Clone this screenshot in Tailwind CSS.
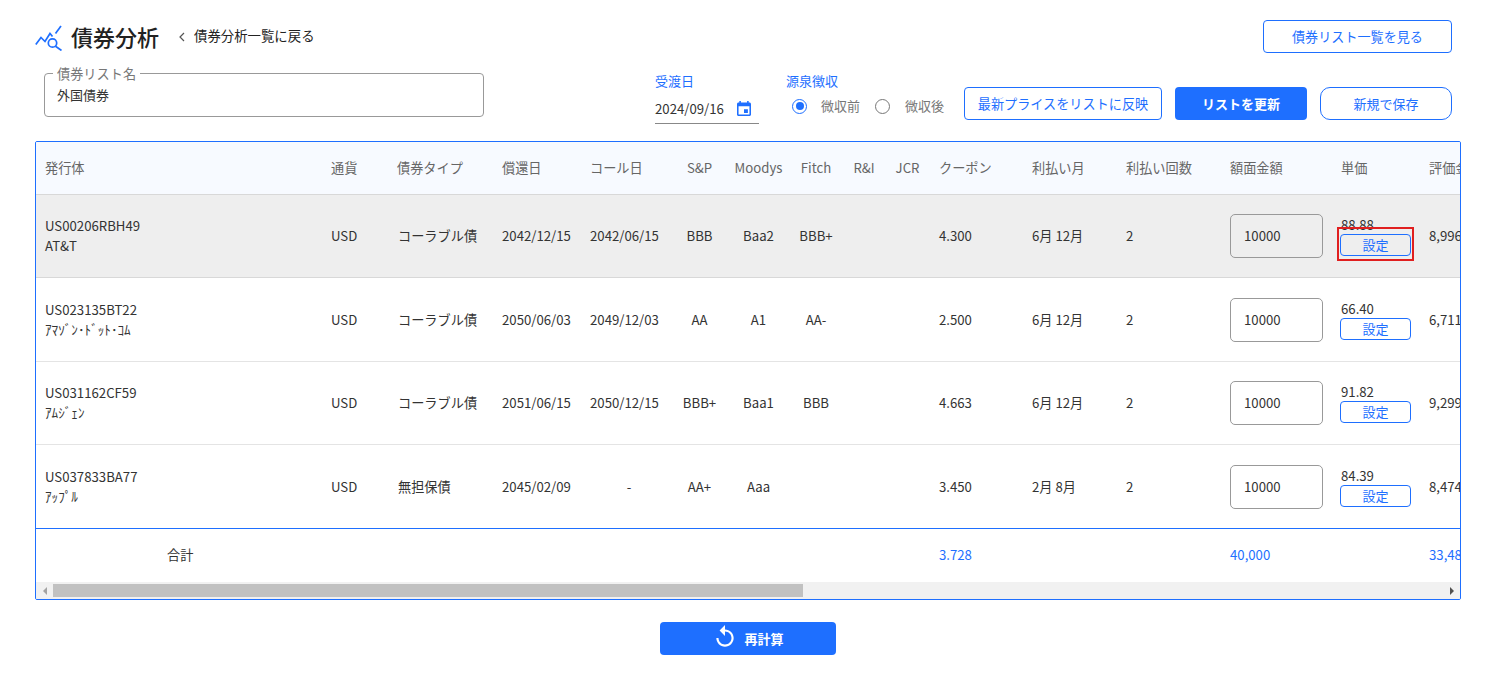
<!DOCTYPE html>
<html lang="ja">
<head>
<meta charset="UTF-8"/>
<title>債券分析</title>
<script src="https://cdn.jsdelivr.net/npm/@tailwindcss/browser@4"></script>
</head>
<body class="w-[1495px] h-[675px] overflow-hidden bg-white text-[13.2px] text-[#333] font-['Noto_Sans_CJK_JP','Noto_Sans',sans-serif]">
<div class="pl-[35px] pt-[20px] w-[1495px]">
    <!-- title -->
    <div class="flex items-start justify-between w-[1417px] h-[33px]">
        <div class="flex items-center h-[33px]">
            <svg class="w-[28px] h-[26px] mt-[2px]" viewBox="0 0 28 26" fill="none" stroke="#1e6fff" stroke-width="1.7">
                <path d="M0.8 19.5 L6 12.5 L10 16.5 L15 8.5 L17.5 11.5"/>
                <path d="M20.5 8.5 L26 1"/>
                <circle cx="17.5" cy="18" r="4.2"/>
                <path d="M20.5 21.2 L26.5 25.5"/>
            </svg>
            <div class="ml-[8px] text-[22px] leading-[33px] text-[#222] font-medium">債券分析</div>
            <svg class="ml-[20px] w-[6px] h-[10px]" viewBox="0 0 6 10" fill="none" stroke="#555" stroke-width="1.2"><path d="M5 1 L1 5 L5 9"/></svg>
            <div class="ml-[9px] -mt-[2px] text-[13.4px] text-[#222]">債券分析一覧に戻る</div>
        </div>
        <button class="w-[189px] h-[33px] border border-[#1e6fff] rounded-[4px] text-[#1e6fff] text-[13.1px]">債券リスト一覧を見る</button>
    </div>

    <!-- filters -->
    <div class="flex items-start h-[68px] mt-[20px] ml-[9px]">
        <div class="relative w-[440px] h-[44px] border border-[#999] rounded-[4px] pl-[12px] pt-[11px] text-[13px] leading-[19px] text-[#333]">
            <span class="absolute left-[8px] top-[-9px] px-[4px] bg-white text-[13.2px] leading-[18px] text-[#777]">債券リスト名</span>
            外国債券
        </div>
        <div class="ml-[171px] w-[104px]">
            <div class="text-[13px] leading-[18px] mt-[-1px] text-[#1e6fff]">受渡日</div>
            <div class="relative flex items-center h-[33px] mt-[1px] pt-[4px] border-b border-[#888] text-[13.2px] text-[#333]">
                <span>2024/09/16</span>
                <svg class="absolute right-[8px] top-[10px] w-[14px] h-[15px]" viewBox="3 1 18 20" preserveAspectRatio="none" fill="#1e6fff"><path d="M17 12h-5v5h5v-5zM16 1v2H8V1H6v2H5c-1.11 0-1.99.9-1.99 2L3 19c0 1.1.89 2 2 2h14c1.1 0 2-.9 2-2V5c0-1.1-.9-2-2-2h-1V1h-2zm3 18H5V8h14v11z"/></svg>
            </div>
        </div>
        <div class="ml-[27px] w-[178px]">
            <div class="text-[13px] leading-[18px] mt-[-1px] text-[#1e6fff]">源泉徴収</div>
            <div class="flex items-center h-[24px] mt-[4px] pl-[6px] text-[13px] text-[#777]">
                <span class="flex items-center justify-center w-[15px] h-[15px] rounded-full border-[1.5px] border-[#1e6fff]"><span class="w-[8px] h-[8px] rounded-full bg-[#1e6fff]"></span></span>
                <span class="ml-[14px]">微収前</span>
                <span class="ml-[15px] w-[15px] h-[15px] rounded-full border-[1.5px] border-[#777]"></span>
                <span class="ml-[15px]">微収後</span>
            </div>
        </div>
        <button class="mt-[14px] w-[198px] h-[33px] border border-[#1e6fff] rounded-[4px] text-[#1e6fff] text-[13.15px]">最新プライスをリストに反映</button>
        <button class="mt-[14px] ml-[13px] w-[132px] h-[33px] rounded-[4px] bg-[#1e6fff] text-white text-[13px] font-bold">リストを更新</button>
        <button class="mt-[14px] ml-[13px] w-[132px] h-[33px] border border-[#1e6fff] rounded-[10px] text-[#1e6fff] text-[13px]">新規で保存</button>
    </div>

    <!-- table -->
    <div class="w-[1426px] h-[459px] border border-[#1e6fff] rounded-[2px] overflow-hidden">
        <div class="h-[440px] overflow-hidden">
            <table class="table-fixed border-separate border-spacing-0 w-[1470px] text-[13.2px] text-[#333]">
                <colgroup>
                    <col class="w-[286px]"/><col class="w-[66px]"/><col class="w-[104px]"/><col class="w-[88px]"/><col class="w-[88px]"/><col class="w-[63px]"/><col class="w-[55px]"/><col class="w-[56px]"/><col class="w-[44px]"/><col class="w-[43px]"/><col class="w-[93px]"/><col class="w-[94px]"/><col class="w-[104px]"/><col class="w-[111px]"/><col class="w-[88px]"/><col class="w-[93px]"/>
                </colgroup>
                <thead>
                <tr class="bg-[#f7faff] text-[#666] text-[13.2px]">
                    <th class="h-[53px] border-b border-[#d8d8d8] pl-[9px] text-left font-normal">発行体</th>
                    <th class="border-b border-[#d8d8d8] pl-[9px] text-left font-normal">通貨</th>
                    <th class="border-b border-[#d8d8d8] pl-[9px] text-left font-normal">債券タイプ</th>
                    <th class="border-b border-[#d8d8d8] pl-[10px] text-left font-normal">償還日</th>
                    <th class="border-b border-[#d8d8d8] pl-[10px] text-left font-normal">コール日</th>
                    <th class="border-b border-[#d8d8d8] text-center font-normal">S&amp;P</th>
                    <th class="border-b border-[#d8d8d8] text-center font-normal">Moodys</th>
                    <th class="border-b border-[#d8d8d8] pl-[4px] text-center font-normal">Fitch</th>
                    <th class="border-b border-[#d8d8d8] text-center font-normal">R&amp;I</th>
                    <th class="border-b border-[#d8d8d8] text-center font-normal">JCR</th>
                    <th class="border-b border-[#d8d8d8] pl-[10px] text-left font-normal">クーポン</th>
                    <th class="border-b border-[#d8d8d8] pl-[10px] text-left font-normal">利払い月</th>
                    <th class="border-b border-[#d8d8d8] pl-[10px] text-left font-normal">利払い回数</th>
                    <th class="border-b border-[#d8d8d8] pl-[10px] text-left font-normal">額面金額</th>
                    <th class="border-b border-[#d8d8d8] pl-[10px] text-left font-normal">単価</th>
                    <th class="border-b border-[#d8d8d8] pl-[10px] text-left font-normal">評価金額</th>
                </tr>
                </thead>
                <tbody>
                <tr class="bg-[#eeeeee]">
                    <td class="h-[83px] border-b border-[#d8d8d8] pl-[9px] leading-[20px]">US00206RBH49<br/>AT&amp;T</td>
                    <td class="border-b border-[#d8d8d8] pl-[9px]">USD</td>
                    <td class="border-b border-[#d8d8d8] pl-[10px]">コーラブル債</td>
                    <td class="border-b border-[#d8d8d8] pl-[10px]">2042/12/15</td>
                    <td class="border-b border-[#d8d8d8] pl-[10px]">2042/06/15</td>
                    <td class="border-b border-[#d8d8d8] text-center">BBB</td>
                    <td class="border-b border-[#d8d8d8] text-center">Baa2</td>
                    <td class="border-b border-[#d8d8d8] pl-[4px] text-center">BBB+</td>
                    <td class="border-b border-[#d8d8d8]"></td>
                    <td class="border-b border-[#d8d8d8]"></td>
                    <td class="border-b border-[#d8d8d8] pl-[10px]">4.300</td>
                    <td class="border-b border-[#d8d8d8] pl-[10px]">6月 12月</td>
                    <td class="border-b border-[#d8d8d8] pl-[10px]">2</td>
                    <td class="border-b border-[#d8d8d8] pl-[10px]"><div class="w-[93px] h-[44px] border border-[#999] rounded-[5px] pl-[13px] leading-[42px]">10000</div></td>
                    <td class="border-b border-[#d8d8d8] pl-[10px]">
                        <div class="relative">
                            <div class="leading-[18px]">88.88</div>
                            <button class="block w-[71px] h-[22px] -ml-[1px] border border-[#1e6fff] rounded-[4px] text-[#1e6fff] text-[13px] leading-[20px]">設定</button>
                            <div class="absolute left-[-4px] top-[11px] w-[77px] h-[34px] border-2 border-[#e01f1f]"></div>
                        </div>
                    </td>
                    <td class="border-b border-[#d8d8d8] pl-[10px]">8,996.80</td>
                </tr>
                <tr>
                    <td class="h-[84px] border-b border-[#e4e4e4] pl-[9px] leading-[20px]">US023135BT22<br/>ｱﾏｿﾞﾝ･ﾄﾞｯﾄ･ｺﾑ</td>
                    <td class="border-b border-[#e4e4e4] pl-[9px]">USD</td>
                    <td class="border-b border-[#e4e4e4] pl-[10px]">コーラブル債</td>
                    <td class="border-b border-[#e4e4e4] pl-[10px]">2050/06/03</td>
                    <td class="border-b border-[#e4e4e4] pl-[10px]">2049/12/03</td>
                    <td class="border-b border-[#e4e4e4] text-center">AA</td>
                    <td class="border-b border-[#e4e4e4] text-center">A1</td>
                    <td class="border-b border-[#e4e4e4] pl-[4px] text-center">AA-</td>
                    <td class="border-b border-[#e4e4e4]"></td>
                    <td class="border-b border-[#e4e4e4]"></td>
                    <td class="border-b border-[#e4e4e4] pl-[10px]">2.500</td>
                    <td class="border-b border-[#e4e4e4] pl-[10px]">6月 12月</td>
                    <td class="border-b border-[#e4e4e4] pl-[10px]">2</td>
                    <td class="border-b border-[#e4e4e4] pl-[10px]"><div class="w-[93px] h-[44px] border border-[#999] rounded-[5px] pl-[13px] leading-[42px]">10000</div></td>
                    <td class="border-b border-[#e4e4e4] pl-[10px]">
                        <div class="leading-[18px]">66.40</div>
                        <button class="block w-[71px] h-[22px] -ml-[1px] border border-[#1e6fff] rounded-[4px] text-[#1e6fff] text-[13px] leading-[20px]">設定</button>
                    </td>
                    <td class="border-b border-[#e4e4e4] pl-[10px]">6,711.20</td>
                </tr>
                <tr>
                    <td class="h-[83px] border-b border-[#e4e4e4] pl-[9px] leading-[20px]">US031162CF59<br/>ｱﾑｼﾞｪﾝ</td>
                    <td class="border-b border-[#e4e4e4] pl-[9px]">USD</td>
                    <td class="border-b border-[#e4e4e4] pl-[10px]">コーラブル債</td>
                    <td class="border-b border-[#e4e4e4] pl-[10px]">2051/06/15</td>
                    <td class="border-b border-[#e4e4e4] pl-[10px]">2050/12/15</td>
                    <td class="border-b border-[#e4e4e4] text-center">BBB+</td>
                    <td class="border-b border-[#e4e4e4] text-center">Baa1</td>
                    <td class="border-b border-[#e4e4e4] pl-[4px] text-center">BBB</td>
                    <td class="border-b border-[#e4e4e4]"></td>
                    <td class="border-b border-[#e4e4e4]"></td>
                    <td class="border-b border-[#e4e4e4] pl-[10px]">4.663</td>
                    <td class="border-b border-[#e4e4e4] pl-[10px]">6月 12月</td>
                    <td class="border-b border-[#e4e4e4] pl-[10px]">2</td>
                    <td class="border-b border-[#e4e4e4] pl-[10px]"><div class="w-[93px] h-[44px] border border-[#999] rounded-[5px] pl-[13px] leading-[42px]">10000</div></td>
                    <td class="border-b border-[#e4e4e4] pl-[10px]">
                        <div class="leading-[18px]">91.82</div>
                        <button class="block w-[71px] h-[22px] -ml-[1px] border border-[#1e6fff] rounded-[4px] text-[#1e6fff] text-[13px] leading-[20px]">設定</button>
                    </td>
                    <td class="border-b border-[#e4e4e4] pl-[10px]">9,299.90</td>
                </tr>
                <tr>
                    <td class="h-[84px] border-b border-[#1e6fff] pl-[9px] leading-[20px]">US037833BA77<br/>ｱｯﾌﾟﾙ</td>
                    <td class="border-b border-[#1e6fff] pl-[9px]">USD</td>
                    <td class="border-b border-[#1e6fff] pl-[10px]">無担保債</td>
                    <td class="border-b border-[#1e6fff] pl-[10px]">2045/02/09</td>
                    <td class="border-b border-[#1e6fff] pl-[10px] text-center">-</td>
                    <td class="border-b border-[#1e6fff] text-center">AA+</td>
                    <td class="border-b border-[#1e6fff] text-center">Aaa</td>
                    <td class="border-b border-[#1e6fff]"></td>
                    <td class="border-b border-[#1e6fff]"></td>
                    <td class="border-b border-[#1e6fff]"></td>
                    <td class="border-b border-[#1e6fff] pl-[10px]">3.450</td>
                    <td class="border-b border-[#1e6fff] pl-[10px]">2月 8月</td>
                    <td class="border-b border-[#1e6fff] pl-[10px]">2</td>
                    <td class="border-b border-[#1e6fff] pl-[10px]"><div class="w-[93px] h-[44px] border border-[#999] rounded-[5px] pl-[13px] leading-[42px]">10000</div></td>
                    <td class="border-b border-[#1e6fff] pl-[10px]">
                        <div class="leading-[18px]">84.39</div>
                        <button class="block w-[71px] h-[22px] -ml-[1px] border border-[#1e6fff] rounded-[4px] text-[#1e6fff] text-[13px] leading-[20px]">設定</button>
                    </td>
                    <td class="border-b border-[#1e6fff] pl-[10px]">8,474.00</td>
                </tr>
                <tr class="text-[#1e6fff]">
                    <td class="h-[53px] pb-[2px] pl-[131px] text-[#333]">合計</td>
                    <td></td><td></td><td></td><td></td><td></td><td></td><td></td><td></td><td></td>
                    <td class="pb-[2px] pl-[10px]">3.728</td>
                    <td></td><td></td>
                    <td class="pb-[2px] pl-[10px]">40,000</td>
                    <td></td>
                    <td class="pb-[2px] pl-[10px]">33,481.90</td>
                </tr>
                </tbody>
            </table>
        </div>
        <!-- scrollbar -->
        <div class="flex items-center h-[17px] bg-[#f1f1f1]">
            <div class="flex items-center justify-center w-[17px] h-[17px]"><span class="w-0 h-0 border-y-[4px] border-y-transparent border-r-[4px] border-r-[#a3a3a3]"></span></div>
            <div class="w-[750px] h-[13px] bg-[#c1c1c1]"></div>
            <div class="flex-1"></div>
            <div class="flex items-center justify-center w-[17px] h-[17px]"><span class="w-0 h-0 border-y-[4px] border-y-transparent border-l-[4px] border-l-[#505050]"></span></div>
        </div>
    </div>

    <!-- recalc -->
    <div class="w-[1426px] flex justify-center mt-[22px]">
        <button class="flex items-center justify-center w-[176px] h-[33px] rounded-[4px] bg-[#1e6fff] text-white text-[13px] font-bold">
            <svg class="w-[26px] h-[26px] mr-[6px] -mt-[3px]" viewBox="0 0 24 24" fill="white"><path d="M12 5V1L7 6l5 5V7c3.31 0 6 2.69 6 6s-2.69 6-6 6-6-2.69-6-6H4c0 4.42 3.58 8 8 8s8-3.58 8-8-3.58-8-8-8z"/></svg>
            再計算
        </button>
    </div>
</div>
</body>
</html>
